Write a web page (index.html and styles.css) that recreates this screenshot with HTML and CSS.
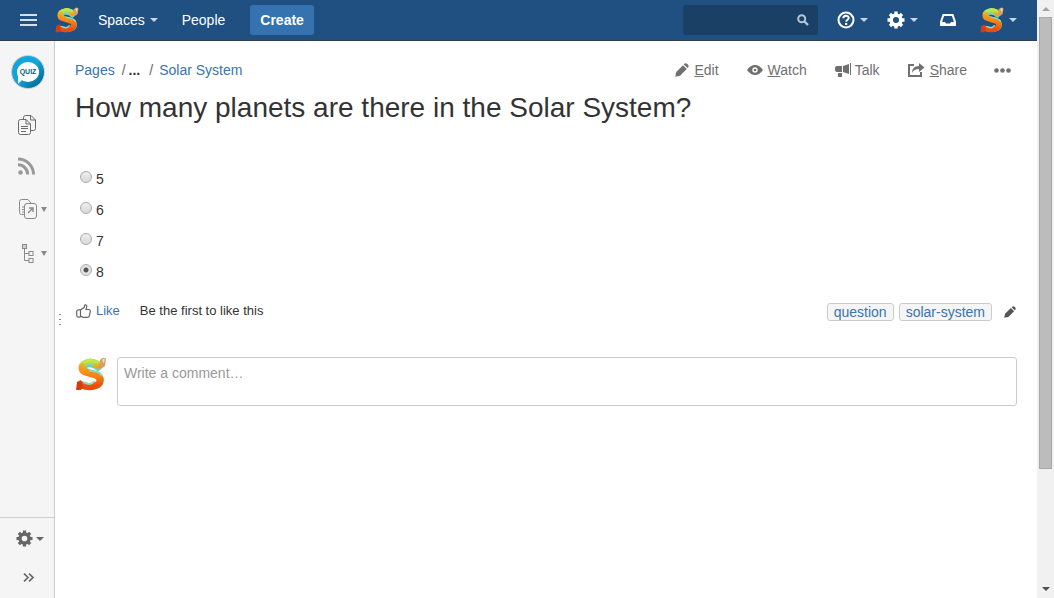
FILE: index.html
```html
<!DOCTYPE html>
<html lang="en">
<head>
<meta charset="utf-8">
<title>How many planets are there in the Solar System?</title>
<link rel="stylesheet" href="styles.css">
</head>
<body>
<svg class="sprites" aria-hidden="true">
  <defs>
    <linearGradient id="s-fill" x1="0" y1="0" x2="0" y2="1">
      <stop offset="0" stop-color="#c6dc3c"/>
      <stop offset=".16" stop-color="#f5a31c"/>
      <stop offset=".55" stop-color="#fb8312"/>
      <stop offset="1" stop-color="#ee4a0c"/>
    </linearGradient>
    <symbol id="s-logo" viewBox="0 0 30 34">
      <path d="M22 11C18 6 8 6 8 11c0 6 17 4 17 12 0 7-10 8-16 5" fill="none" stroke="#74cfae" stroke-width="6" stroke-linecap="round"/>
      <path d="M22 8C18 4 6 4 6 11c0 7 18 4 18 12 0 7-12 8-18 5" fill="none" stroke="url(#s-fill)" stroke-width="7" stroke-linecap="round"/>
      <path d="M9 5c4-3 9-2 12 0" fill="none" stroke="#b8ea48" stroke-width="3" stroke-linecap="round"/>
      <path d="M9 9c1-2 5-2 8-1" fill="none" stroke="#7fdcb0" stroke-width="1.500" stroke-linecap="round"/>
      <path d="M14 13.500c5 .5 10 1.500 12 5" fill="none" stroke="#7fe0c4" stroke-width="1.800" stroke-linecap="round"/>
      <path d="M8 25.500c4 2 8 2 10-1" fill="none" stroke="#86e0c8" stroke-width="1.800" stroke-linecap="round"/>
      <path d="M23 10l1-7q3-4 6-1l-1 7-4 3z" fill="#d2a06c"/>
      <path d="M26 2.500q2-1.500 3 0l-1.500 4z" fill="#f6dcb4"/>
      <path d="M0 33l1-8 4-2 2 6-2 4z" fill="#d63c14"/>
    </symbol>
    <symbol id="gear" viewBox="0 0 18 18">
      <circle cx="9" cy="9" r="4.800" fill="none" stroke="currentColor" stroke-width="3.600"/>
      <path d="M9 .5v3M9 14.500v3M.5 9h3M14.500 9h3M3 3l2 2M13 13l2 2M15 3l-2 2M5 13l-2 2" stroke="currentColor" stroke-width="3.400"/>
    </symbol>
    <symbol id="pencil" viewBox="0 0 14 14">
      <path d="M.3 13.700l.9-4.700L8 2.200l3.800 3.800L5 12.800zM8.800 1.400l.6-.6q1.500-1.300 3.200.4t.6 3.200l-.6.600z" fill="currentColor"/>
    </symbol>
  </defs>
</svg>

<div class="window">
  <div class="app">
    <header class="topbar">
      <button class="bare menu" aria-label="Menu"><svg width="17" height="12" viewBox="0 0 17 12"><path d="M0 1h17M0 6h17M0 11h17" stroke="#d5e0ec" stroke-width="2"/></svg></button>
      <a class="brand" href="#" aria-label="Home"><svg width="24" height="26"><use href="#s-logo"/></svg></a>
      <nav class="topnav">
        <a href="#">Spaces<span class="caret"></span></a>
        <a href="#">People</a>
      </nav>
      <button class="create">Create</button>
      <div class="search">
        <input type="search" aria-label="Search">
        <svg width="12" height="12" viewBox="0 0 12 12"><circle cx="4.700" cy="4.700" r="3.500" fill="none" stroke="#b4c4d4" stroke-width="2"/><path d="M7.500 7.500l3.500 3.500" stroke="#b4c4d4" stroke-width="2.400"/></svg>
      </div>
      <div class="tools">
        <button class="bare" aria-label="Help"><svg width="18" height="18" viewBox="0 0 18 18"><circle cx="9" cy="9" r="7.500" fill="none" stroke="currentColor" stroke-width="2"/><path d="M6.300 7.200c0-3.400 5.400-3.200 5.400-.3 0 1.800-2.600 1.900-2.600 3.900" fill="none" stroke="currentColor" stroke-width="2"/><path d="M8 12h2.200v2H8z" fill="currentColor"/></svg><span class="caret"></span></button>
        <button class="bare" aria-label="Settings"><svg width="18" height="18"><use href="#gear"/></svg><span class="caret"></span></button>
        <button class="bare" aria-label="Notifications"><svg width="18" height="14" viewBox="0 0 18 14"><path d="M4.400 2h9.200L16 9v3H2V9z" fill="none" stroke="currentColor" stroke-width="2"/><path d="M2 9h4l1 1.500h4L12 9h4v4H2z" fill="currentColor"/></svg></button>
        <button class="bare" aria-label="Profile"><svg width="24" height="26"><use href="#s-logo"/></svg><span class="caret"></span></button>
      </div>
    </header>

    <div class="body">
      <aside class="sidebar">
        <nav class="side-list">
          <a class="quiz" href="#"><span>QUIZ</span></a>
          <a href="#" aria-label="Pages"><svg width="18" height="20" viewBox="0 0 18 20" fill="none" stroke="#6b6b6b"><path d="M5.500 4V2.500q0-2 2-2H13L17.500 5v8.500q0 2-2 2H13M12.500.5V5h5M2.500 4.500H8L12.500 9v8.500q0 2-2 2h-8q-2 0-2-2v-11q0-2 2-2zM8 4.500V9h4.500M3 11.500h7M3 13.500h7M3 16.500h5"/></svg></a>
          <a class="feed" href="#" aria-label="Blog"><svg width="18" height="18" viewBox="0 0 18 18" fill="none" stroke="#999" stroke-width="3"><circle cx="2.500" cy="15.500" r="2.200" fill="#999" stroke="none"/><path d="M0 7.800A9.700 9.700 0 0 1 9.700 17.500M0 2A15.500 15.500 0 0 1 15.500 17.500"/></svg></a>
          <a class="has-menu" href="#" aria-label="Shortcuts"><svg width="18" height="20" viewBox="0 0 18 20" fill="none" stroke="#8a8a8a"><path d="M5 15.500H2.500q-2 0-2-2v-11q0-2 2-2H9L12 4M3 8h2M3 10.500h2M3 13h2"/><rect x="5.500" y="4.500" width="12" height="15" rx="2.500"/><path d="M9 14l5-5M10 9h4v4" stroke-width="1.400"/></svg><span class="caret tiny"></span></a>
          <a class="has-menu tree" href="#" aria-label="Page tree"><svg width="12" height="19" viewBox="0 0 12 19" fill="none" stroke="#8a8a8a"><rect x=".5" y=".5" width="4" height="4" fill="#d0d0d0"/><path d="M2.500 5v11.500H7M2.500 9.500H7"/><rect x="7" y="7.500" width="4" height="4"/><rect x="7" y="14.500" width="4" height="4"/></svg><span class="caret tiny"></span></a>
        </nav>
        <div class="side-foot">
          <button class="bare" aria-label="Space tools"><svg width="17" height="17"><use href="#gear"/></svg><span class="caret"></span></button>
          <button class="bare" aria-label="Expand sidebar"><svg width="11" height="9" viewBox="0 0 11 9"><path d="M1 .7l4 3.800-4 3.800M6 .7l4 3.800-4 3.800" fill="none" stroke="currentColor" stroke-width="1.600"/></svg></button>
        </div>
      </aside>
      <div class="grip" aria-hidden="true"><i></i><i></i><i></i></div>

      <main class="content">
        <div class="page-head">
          <nav class="crumbs"><a href="#">Pages</a><span class="slash">/</span><b>...</b><span class="slash last">/</span><a href="#">Solar System</a></nav>
          <div class="actions">
            <a class="edit" href="#"><svg width="14" height="14"><use href="#pencil"/></svg><span><u>E</u>dit</span></a>
            <a class="watch" href="#"><svg width="16" height="12" viewBox="0 0 16 12"><path d="M0 6Q3.500 1 8 1t8 5q-3.500 5-8 5T0 6z" fill="currentColor"/><circle cx="8" cy="6" r="2.700" fill="#fff"/><circle cx="8" cy="6" r="1.300" fill="currentColor"/></svg><span><u>W</u>atch</span></a>
            <a class="talk" href="#"><svg width="16" height="14" viewBox="0 0 16 14" fill="currentColor"><path d="M2 3h5v6H2Q0 9 0 7V5q0-2 2-2zM8 3l6-2v10L8 9zM15 0h1v12h-1zM3 10h4v4H3z"/></svg><span>Talk</span></a>
            <a class="share" href="#"><svg width="17" height="14" viewBox="0 0 17 14"><path d="M6 2H1v11h12V9" fill="none" stroke="currentColor" stroke-width="2"/><path d="M4 10q0-7 7-7V0l5.500 4.500L11 9V6q-5 0-7 4z" fill="currentColor"/></svg><span><u>S</u>hare</span></a>
            <button class="bare more" aria-label="More actions"><svg width="18" height="5" viewBox="0 0 18 5" fill="currentColor"><circle cx="2.500" cy="2.500" r="2.300"/><circle cx="8.500" cy="2.500" r="2.300"/><circle cx="14.500" cy="2.500" r="2.300"/></svg></button>
          </div>
        </div>
        <h1>How many planets are there in the Solar System?</h1>

        <form class="answers">
          <label><input type="radio" name="planets" value="5"><span>5</span></label>
          <label><input type="radio" name="planets" value="6"><span>6</span></label>
          <label><input type="radio" name="planets" value="7"><span>7</span></label>
          <label><input type="radio" name="planets" value="8" checked><span>8</span></label>
        </form>

        <div class="meta">
          <a class="like" href="#"><svg width="15" height="14" viewBox="0 0 15 14" fill="none" stroke="#666" stroke-width="1.200"><path d="M4.500 6L8 3.500 9 .8q1.800-.3 1.800 1.700L10 5.500h3q1.500.3 1.300 2l-1 4.500q-.5 1.300-1.800 1.300H7L4.500 12M4.500 5.800H2.300Q.7 6 .7 7.500v4q.2 1.500 1.500 1.700h1.600q.8-.3.700-1.200z"/></svg>Like</a>
          <span class="first">Be the first to like this</span>
          <div class="labels">
            <a class="tag" href="#">question</a>
            <a class="tag" href="#">solar-system</a>
            <button class="bare" aria-label="Edit labels"><svg width="12" height="12"><use href="#pencil"/></svg></button>
          </div>
        </div>

        <div class="comment">
          <svg width="30" height="34"><use href="#s-logo"/></svg>
          <textarea aria-label="Comment" placeholder="Write a comment…"></textarea>
        </div>
      </main>
    </div>
  </div>
  <div class="scrollbar" aria-hidden="true">
    <span class="arrow up"></span>
    <span class="thumb"></span>
    <span class="arrow down"></span>
  </div>
</div>
</body>
</html>
```

FILE: styles.css
```css
* { box-sizing: border-box; }

body {
  margin: 0;
  background: #fff;
  color: #333;
  font: 14px/20px "Liberation Sans", Arial, sans-serif;
}

a { color: #3b73af; text-decoration: none; }
svg { display: block; flex: none; }
.sprites { position: absolute; width: 0; height: 0; }
button, input, textarea { font: inherit; }

.bare {
  display: flex;
  align-items: center;
  gap: 5px;
  padding: 0;
  border: 0;
  background: none;
  color: inherit;
}

.caret {
  border: 4px solid transparent;
  border-top-color: currentColor;
  border-bottom: 0;
}
.caret.tiny { border-width: 5px 3px 0; color: #888; }

.window { display: flex; height: 100vh; }
.app { flex: 1; min-width: 0; display: flex; flex-direction: column; }

/* Top bar */
.topbar {
  display: flex;
  align-items: center;
  height: 41px;
  padding: 0 20px;
  background: #205081;
  border-bottom: 1px solid #2e3d54;
  color: #fff;
}
.brand { margin-left: 18px; }
.topnav { display: flex; gap: 24px; margin-left: 19px; }
.topnav a { display: flex; align-items: center; gap: 5px; color: #fff; }
.topbar .caret { border-top-color: #c8d6e5; }
.create {
  height: 30px;
  margin-left: 25px;
  padding: 0 10px;
  border: 0;
  border-radius: 3px;
  background: #3572b0;
  color: #fff;
  font-weight: bold;
}
.search {
  display: flex;
  align-items: center;
  width: 135px;
  height: 30px;
  margin-left: auto;
  padding-right: 9px;
  border-radius: 3px;
  background: #1a4066;
}
.search input {
  flex: 1;
  min-width: 0;
  padding: 0 8px;
  border: 0;
  background: none;
  color: #fff;
  outline: 0;
}
.tools { display: flex; gap: 19px; margin-left: 19px; }
.tools .bare:nth-child(3) { margin: 0 4px 0 2px; }

/* Sidebar */
.body { flex: 1; min-height: 0; display: flex; }
.sidebar {
  display: flex;
  flex-direction: column;
  justify-content: space-between;
  width: 55px;
  background: #f5f5f5;
  border-right: 1px solid #ccc;
}
.side-list {
  display: flex;
  flex-direction: column;
  align-items: flex-start;
  gap: 24px;
  padding: 14px 0 0 18px;
}
.side-list .quiz {
  display: grid;
  place-items: center;
  width: 34px;
  height: 34px;
  margin: 0 0 2px -7px;
  border: 1px solid #ccc;
  border-radius: 50%;
  background: linear-gradient(135deg, #12a5dc 50%, #0876a5 80%);
}
.quiz span {
  position: relative;
  width: 22px;
  height: 20px;
  border-radius: 50%;
  background: #fff;
  color: #075e85;
  font: bold 7px/20px "Liberation Sans", Arial, sans-serif;
  text-align: center;
}
.quiz span::after {
  content: "";
  position: absolute;
  left: 1px;
  bottom: -2px;
  border: 4px solid transparent;
  border-left-color: #fff;
}
.side-list .feed { margin-top: -2px; }
.has-menu { display: flex; align-items: center; gap: 4px; padding-left: 1px; }
.has-menu.tree { gap: 7px; margin-top: 1px; padding-left: 4px; }
.side-foot {
  display: flex;
  flex-direction: column;
  gap: 26px;
  height: 81px;
  padding: 12px 0 0 16px;
  border-top: 1px solid #ccc;
  color: #666;
}
.side-foot .bare { gap: 3px; }
.side-foot .bare:last-child { margin-left: 7px; }

.grip {
  display: flex;
  flex-direction: column;
  justify-content: center;
  gap: 4px;
  width: 20px;
  padding-left: 4px;
}
.grip i { width: 2px; height: 1px; background: #888; }

/* Page */
.content { flex: 1; min-width: 0; padding: 19px 20px 0 0; }
.page-head { display: flex; justify-content: space-between; }
.crumbs { display: flex; color: #333; }
.slash { margin: 0 3px 0 7px; color: #666; }
.slash.last { margin: 0 6px 0 9px; }
.actions { display: flex; margin-right: 5px; color: #707070; }
.actions a { display: flex; align-items: center; gap: 5px; color: #707070; }
.actions a + a { margin-left: 28px; }
.actions .talk { gap: 4px; }
.actions .more { margin-left: 27px; }

h1 {
  margin: 11px 0 0;
  font-size: 28px;
  line-height: 34px;
  font-weight: normal;
}

.answers { display: grid; gap: 11px; margin: 44px 0 0 5px; }
.answers label { display: flex; align-items: flex-start; gap: 4px; }
.answers input {
  appearance: none;
  width: 12px;
  height: 12px;
  margin: 2px 0 0;
  border: 1px solid #aaa;
  border-radius: 50%;
  background: linear-gradient(#eee, #d8d8d8);
}
.answers input:checked { background: radial-gradient(circle, #555 0 2px, #e4e4e4 3px); }

.meta {
  display: flex;
  align-items: center;
  margin-top: 19px;
  font-size: 13px;
}
.like { display: flex; align-items: center; gap: 5px; padding-left: 1px; }
.first { margin-left: 20px; }
.labels { display: flex; align-items: center; gap: 5px; margin-left: auto; padding-top: 2px; font-size: 14px; }
.tag {
  padding: 0 6px;
  border: 1px solid #ccc;
  border-radius: 3px;
  background: #f5f5f5;
  line-height: 16px;
}
.labels .bare { margin: 0 1px 0 7px; color: #555; }

.comment { display: flex; gap: 11px; margin-top: 36px; padding-left: 1px; }
.comment textarea {
  display: block;
  flex: 1;
  height: 49px;
  padding: 5px 6px;
  border: 1px solid #ccc;
  border-radius: 3px;
  resize: none;
  outline: 0;
}
.comment textarea::placeholder { color: #999; opacity: 1; }

/* Scroll track */
.scrollbar {
  display: flex;
  flex-direction: column;
  align-items: center;
  width: 17px;
  padding: 7px 0;
  background: #f1f1f1;
}
.arrow { border: 4px solid transparent; }
.arrow.up { border-top: 0; border-bottom-color: #a3a3a3; }
.arrow.down { margin-top: auto; border-bottom: 0; border-top-color: #505050; }
.thumb {
  width: 13px;
  height: 77.4%;
  margin-top: 6px;
  border: 1px solid #a8a8a8;
  background: #bcbcbc;
}
```
